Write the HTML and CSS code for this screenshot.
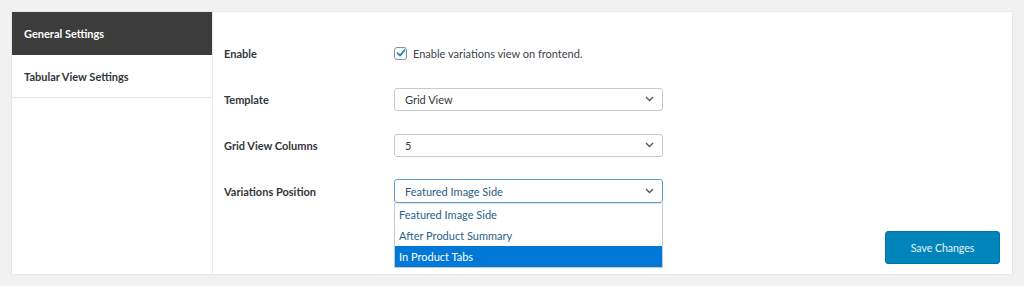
FILE: index.html
```html
<!DOCTYPE html>
<html>
<head>
<meta charset="utf-8">
<link rel="stylesheet" href="styles.css">
</head>
<body>
<div class="wrap">
  <nav class="sidebar">
    <div class="tab active">General Settings</div>
    <div class="tab">Tabular View Settings</div>
  </nav>
  <main class="main">
    <div class="form">
      <div class="row">
        <div class="label">Enable</div>
        <label class="check">
          <span class="box"><svg width="10" height="10" viewBox="0 0 10 10"><path d="M1.5 5.2 L4 7.6 L8.6 2.2" fill="none" stroke="#1e8cbe" stroke-width="1.8" stroke-linecap="round" stroke-linejoin="round"/></svg></span>
          <span>Enable variations view on frontend.</span>
        </label>
      </div>
      <div class="row">
        <div class="label">Template</div>
        <div class="select"><span>Grid View</span><svg class="chev" width="9" height="6" viewBox="0 0 9 6"><path d="M1 1 L4.5 4.5 L8 1" fill="none" stroke="#555" stroke-width="1.4"/></svg></div>
      </div>
      <div class="row">
        <div class="label">Grid View Columns</div>
        <div class="select"><span>5</span><svg class="chev" width="9" height="6" viewBox="0 0 9 6"><path d="M1 1 L4.5 4.5 L8 1" fill="none" stroke="#555" stroke-width="1.4"/></svg></div>
      </div>
      <div class="row">
        <div class="label">Variations Position</div>
        <div class="select focus"><span>Featured Image Side</span><svg class="chev" width="9" height="6" viewBox="0 0 9 6"><path d="M1 1 L4.5 4.5 L8 1" fill="none" stroke="#555" stroke-width="1.4"/></svg>
          <ul class="menu">
            <li>Featured Image Side</li>
            <li>After Product Summary</li>
            <li class="hl">In Product Tabs</li>
          </ul>
        </div>
      </div>
    </div>
    <div class="footer">
      <button class="save">Save Changes</button>
    </div>
  </main>
</div>
</body>
</html>
```

FILE: styles.css
```css
* { box-sizing: border-box; }
html, body { margin: 0; padding: 0; }
body {
  background: #f1f1f1;
  padding: 11px 11px 11px 11px;
  font-family: Lato, "Open Sans", sans-serif;
  font-size: 11px;
  color: #23282d;
}
.wrap {
  display: flex;
  height: 264px;
  background: #fff;
  border: 1px solid #e8e8e8;
}
.sidebar {
  width: 201px;
  border-right: 1px solid #e8e8e8;
  flex: none;
}
.tab {
  height: 43px;
  display: flex;
  align-items: center;
  padding-left: 12px;
  font-weight: 700;
  font-size: 11px;
  color: #32373c;
  border-bottom: 1px solid #e8e8e8;
}
.tab.active {
  background: #3c3c3c;
  color: #fff;
  border-bottom-color: #3c3c3c;
}
.main {
  flex: 1;
  display: flex;
  flex-direction: column;
  padding: 18px 12px 10px 11px;
}
.form { display: flex; flex-direction: column; }
.row {
  height: 46px;
  display: flex;
  align-items: center;
}
.label {
  width: 170px;
  flex: none;
  font-weight: 700;
  color: #32373c;
}
.check {
  display: flex;
  align-items: center;
  gap: 6px;
  color: #3c434a;
}
.box {
  width: 13px;
  height: 13px;
  border: 1px solid #8c8f94;
  border-radius: 3px;
  display: flex;
  align-items: center;
  justify-content: center;
}
.select {
  position: relative;
  width: 269px;
  height: 23px;
  border: 1px solid #c9c9c9;
  border-radius: 3px;
  display: flex;
  align-items: center;
  justify-content: space-between;
  padding: 0 8px 0 10px;
  color: #32373c;
}
.select.focus {
  border-color: #5b9dd9;
  height: 24px;
  color: #2d5b7f;
}
.chev { flex: none; }
.menu {
  position: absolute;
  left: -1px;
  right: -1px;
  top: 23px;
  margin: 0;
  padding: 0;
  list-style: none;
  background: #fff;
  border: 1px solid #c9c9c9;
  border-top: 1px solid #e2e2e2;
}
.menu li {
  height: 21px;
  display: flex;
  align-items: center;
  padding-left: 4px;
  color: #2a5f8a;
}
.menu li.hl {
  background: #0078d7;
  color: #fff;
}
.footer {
  margin-top: auto;
  display: flex;
  justify-content: flex-end;
}
.save {
  width: 115px;
  height: 33px;
  background: #0085ba;
  border: 1px solid #0073aa;
  border-radius: 3px;
  color: #e9f3f8;
  font-family: inherit;
  font-size: 10.5px;
}
```
